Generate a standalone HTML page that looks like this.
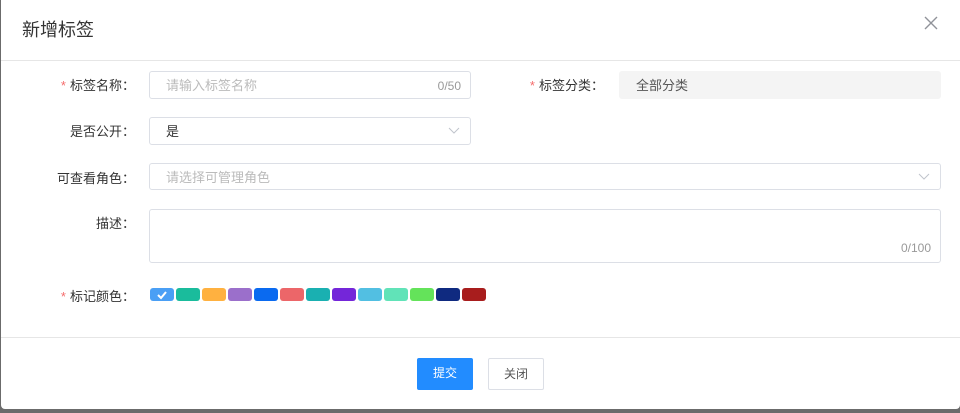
<!DOCTYPE html>
<html><head><meta charset="utf-8"><style>
*{box-sizing:border-box;margin:0;padding:0}
body{width:960px;height:413px;background:#6b6b6b;font-family:"Liberation Sans","Noto Sans CJK SC",sans-serif;font-size:13px;color:#333;position:relative;overflow:hidden}
.dlg{position:absolute;left:1px;top:0;width:959px;height:409px;background:#fff;border-radius:0 0 4px 4px}
.t{position:absolute;left:21px;top:16px;font-size:18px;color:#333}
.x{position:absolute;left:923px;top:16px}
.line{position:absolute;left:0;width:959px;height:1px;background:#e6e6e6}
.lab{position:absolute;text-align:right;width:120px;color:#333}
.lab i{color:#f56c6c;font-style:normal;margin-right:4px}
.in{position:absolute;border:1px solid #dcdfe6;border-radius:3px;background:#fff;color:#bbb;padding-left:16px;line-height:28px}
.cnt{position:absolute;right:9px;color:#999;font-size:12px}
.sw{position:absolute;top:288px;width:24px;height:13px;border-radius:3px}
.btn{position:absolute;top:358px;height:32px;width:56px;border-radius:2px;text-align:center;line-height:30px;font-size:12px}
</style></head><body><div class="dlg">
<div class="t">新增标签</div>
<svg class="x" width="14" height="14" viewBox="0 0 14 14"><path d="M1 1L13 13M13 1L1 13" stroke="#909399" stroke-width="1.4"/></svg>
<div class="line" style="top:60px"></div>
<div class="lab" style="left:14px;top:75px"><i>*</i>标签名称：</div>
<div class="in" style="left:148px;top:71px;width:322px;height:28px">请输入标签名称<span class="cnt" style="top:0">0/50</span></div>
<div class="lab" style="left:483px;top:75px"><i>*</i>标签分类：</div>
<div class="in" style="left:618px;top:71px;width:322px;height:28px;background:#f4f4f4;border-color:#f4f4f4;color:#555">全部分类</div>
<div class="lab" style="left:14px;top:121px">是否公开：</div>
<div class="in" style="left:148px;top:117px;width:322px;height:28px;color:#333">是<svg style="position:absolute;right:10px;top:9px" width="12" height="8"><path d="M1 1L6 6L11 1" fill="none" stroke="#c0c4cc"/></svg></div>
<div class="lab" style="left:14px;top:168px">可查看角色：</div>
<div class="in" style="left:148px;top:163px;width:792px;height:27px;line-height:27px">请选择可管理角色<svg style="position:absolute;right:10px;top:9px" width="12" height="8"><path d="M1 1L6 6L11 1" fill="none" stroke="#c0c4cc"/></svg></div>
<div class="lab" style="left:14px;top:213px">描述：</div>
<div class="in" style="left:148px;top:209px;width:792px;height:54px"><span class="cnt" style="top:24px">0/100</span></div>
<div class="lab" style="left:14px;top:286px"><i>*</i>标记颜色：</div>
<div class="sw" style="left:149px;background:#4a9ff5"><svg width="24" height="13"><path d="M8 7L11 10L16 4" fill="none" stroke="#fff" stroke-width="2"/></svg></div>
<div class="sw" style="left:175px;background:#1abc9c"></div>
<div class="sw" style="left:201px;background:#ffb140"></div>
<div class="sw" style="left:227px;background:#9b6fcb"></div>
<div class="sw" style="left:253px;background:#0a6af0"></div>
<div class="sw" style="left:279px;background:#ec6669"></div>
<div class="sw" style="left:305px;background:#1ab0b1"></div>
<div class="sw" style="left:331px;background:#7426d9"></div>
<div class="sw" style="left:357px;background:#52bfe2"></div>
<div class="sw" style="left:383px;background:#61e3b8"></div>
<div class="sw" style="left:409px;background:#64e35a"></div>
<div class="sw" style="left:435px;background:#0f2a80"></div>
<div class="sw" style="left:461px;background:#a81d1d"></div>
<div class="line" style="top:337px"></div>
<div class="btn" style="left:416px;background:#228cff;color:#fff">提交</div>
<div class="btn" style="left:487px;border:1px solid #dcdfe6;color:#555;width:56px">关闭</div>
</div></body></html>
